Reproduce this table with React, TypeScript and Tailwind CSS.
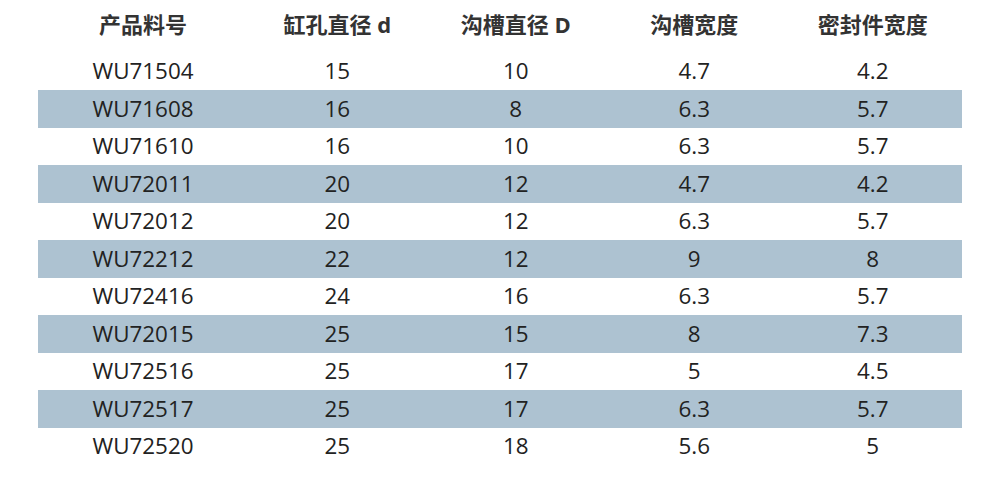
import React from "react";

const headers = ["产品料号", "缸孔直径 d", "沟槽直径 D", "沟槽宽度", "密封件宽度"];
const rows: string[][] = [
  ["WU71504", "15", "10", "4.7", "4.2"],
  ["WU71608", "16", "8", "6.3", "5.7"],
  ["WU71610", "16", "10", "6.3", "5.7"],
  ["WU72011", "20", "12", "4.7", "4.2"],
  ["WU72012", "20", "12", "6.3", "5.7"],
  ["WU72212", "22", "12", "9", "8"],
  ["WU72416", "24", "16", "6.3", "5.7"],
  ["WU72015", "25", "15", "8", "7.3"],
  ["WU72516", "25", "17", "5", "4.5"],
  ["WU72517", "25", "17", "6.3", "5.7"],
  ["WU72520", "25", "18", "5.6", "5"],
];

export default function App() {
  return (
    <div className="w-[983px] h-[493px] bg-white overflow-hidden">
      <div className="ml-[38px] w-[924px] flex flex-col">
        <div
          className="grid grid-cols-[210px_1fr_1fr_1fr_1fr] h-[52.5px] pt-[10px] text-[22px] font-bold text-[#333] leading-[28px]"
          style={{ fontFamily: '"Open Sans", "Noto Sans CJK SC", sans-serif' }}
        >
          {headers.map((h) => (
            <div key={h} className="text-center">
              {h}
            </div>
          ))}
        </div>
        {rows.map((r, i) => (
          <div
            key={r[0]}
            className={`grid grid-cols-[210px_1fr_1fr_1fr_1fr] h-[37.5px] items-center text-[22.4px] text-[#222] ${
              i % 2 === 1 ? "bg-[#adc2d1]" : "bg-white"
            }`}
            style={{ fontFamily: '"Open Sans", sans-serif' }}
          >
            {r.map((c, j) => (
              <div key={j} className="text-center leading-[30px]">
                {c}
              </div>
            ))}
          </div>
        ))}
      </div>
    </div>
  );
}
